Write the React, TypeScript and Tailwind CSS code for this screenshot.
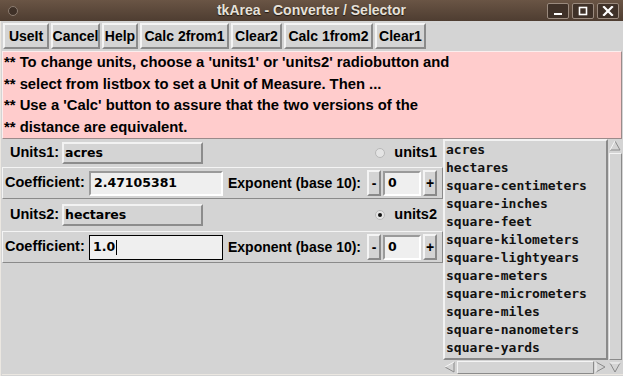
import type { ReactNode } from "react"

const ui = { fontFamily: '"Liberation Sans", Arial, sans-serif' }
const entryFont = { fontFamily: '"DejaVu Sans", Verdana, sans-serif' }
const mono = { fontFamily: '"DejaVu Sans Mono", "Liberation Mono", monospace' }

const toolButtons = [
  { label: "UseIt", w: "w-[46px]" },
  { label: "Cancel", w: "w-[49px]" },
  { label: "Help", w: "w-[36px]" },
  { label: "Calc 2from1", w: "w-[89px]" },
  { label: "Clear2", w: "w-[51px]" },
  { label: "Calc 1from2", w: "w-[89px]" },
  { label: "Clear1", w: "w-[51px]" },
]

const units = [
  "acres",
  "hectares",
  "square-centimeters",
  "square-inches",
  "square-feet",
  "square-kilometers",
  "square-lightyears",
  "square-meters",
  "square-micrometers",
  "square-miles",
  "square-nanometers",
  "square-yards",
]

// raised tk-style button
const TkButton = ({ children, className = "" }: { children: ReactNode; className?: string }) => (
  <div
    className={`flex items-center justify-center border-2 border-t-[#f4f4f4] border-l-[#f4f4f4] border-b-[#8a8a8a] border-r-[#8a8a8a] bg-[#d4d4d4] text-[14px] font-bold text-black ${className}`}
    style={ui}
  >
    {children}
  </div>
)

const Radio = ({ checked, label }: { checked: boolean; label: string }) => (
  <div className="flex items-center gap-[8px] pr-[6px]">
    <svg width="12" height="12" viewBox="0 0 12 12">
      <circle cx="6" cy="6" r="4.5" fill="#e4e4e4" stroke="#b8b8b8" strokeWidth="1" />
      {checked && <circle cx="6" cy="6" r="2" fill="#111" />}
    </svg>
    <span className="text-[14.5px] font-bold text-black" style={ui}>
      {label}
    </span>
  </div>
)

const UnitsRow = ({ name, value, checked, radio }: { name: string; value: string; checked: boolean; radio: string }) => (
  <div className="flex h-[28px] items-center">
    <span className="w-[60px] pl-[8px] text-[14.5px] font-bold text-black" style={ui}>
      {name}
    </span>
    <div
      className="flex h-[22px] w-[141px] items-center border-2 border-t-[#f2f2f2] border-l-[#f2f2f2] border-b-[#8c8c8c] border-r-[#8c8c8c] pl-[1px] text-[12.5px] font-bold text-black"
      style={entryFont}
    >
      {value}
    </div>
    <div className="flex-1" />
    <Radio checked={checked} label={radio} />
  </div>
)

const CoefRow = ({ value, focused }: { value: string; focused?: boolean }) => (
  <div className="flex h-[32px] items-center border border-t-[#f4f4f4] border-l-[#f4f4f4] border-b-[#8a8a8a] border-r-[#8a8a8a]">
    <span className="w-[86px] pl-[2px] text-[14.5px] font-bold text-black" style={ui}>
      Coefficient:
    </span>
    <div
      className={`flex h-[25px] w-[134px] items-center bg-[#efefef] pl-[3px] text-[12.5px] font-bold text-black ${
        focused ? "border border-black" : "border-2 border-t-[#9a9a9a] border-l-[#9a9a9a] border-b-white border-r-white"
      }`}
      style={entryFont}
    >
      {value}
      {focused && <span className="ml-px h-[15px] w-px bg-black" />}
    </div>
    <span className="ml-[5px] w-[139px] text-[14px] font-bold text-black" style={ui}>
      Exponent (base 10):
    </span>
    <TkButton className="h-[26px] w-[14px]">-</TkButton>
    <div
      className="ml-[2px] flex h-[25px] w-[38px] items-center border-2 border-t-[#9a9a9a] border-l-[#9a9a9a] border-b-white border-r-white bg-[#efefef] pl-[3px] text-[12.5px] font-bold text-black"
      style={entryFont}
    >
      0
    </div>
    <TkButton className="ml-[2px] h-[26px] w-[14px]">+</TkButton>
  </div>
)

const Arrow = ({ dir }: { dir: "up" | "down" | "left" | "right" }) => {
  const pts = {
    up: { light: "2,11 7,2", dark: "7,2 12,11 2,11" },
    down: { light: "2,3 12,3", dark: "12,3 7,12 2,3" },
    left: { light: "11,2 2,7", dark: "2,7 11,12 11,2" },
    right: { light: "2,2 2,12", dark: "2,12 11,7 2,2" },
  }[dir]
  return (
    <svg width="14" height="14" viewBox="0 0 14 14" className="shrink-0">
      <polyline points={pts.dark} fill="none" stroke="#8a8a8a" strokeWidth="1" />
      <polyline points={pts.light} fill="none" stroke="#f6f6f6" strokeWidth="1" />
    </svg>
  )
}

export default function App() {
  return (
    <div className="flex h-[376px] w-[623px] flex-col overflow-hidden bg-[#4c3c30]">
      {/* title bar */}
      <div className="grid h-[21px] shrink-0 grid-cols-[1fr_auto_1fr] items-center bg-gradient-to-b from-[#6a5545] to-[#4e3d31]">
        <div className="pl-[7px]">
          <svg width="12" height="12" viewBox="0 0 12 12">
            <circle cx="6" cy="6" r="4.5" fill="#3f3128" stroke="#8c7c70" strokeWidth="1" />
          </svg>
        </div>
        <span className="text-[14px] font-bold text-[#e6e1d9] [text-shadow:0_1px_1px_#1e150f]" style={ui}>
          tkArea - Converter / Selector
        </span>
        <div className="flex justify-end gap-[3px] pr-[4px]">
          {["min", "max", "close"].map((k) => (
            <div
              key={k}
              className="flex h-[16px] w-[22px] items-center justify-center rounded-[2px] border border-[#9a8a7e] bg-[#3f3128]"
            >
              <svg width="12" height="10" viewBox="0 0 12 10">
                {k === "min" && <rect x="2" y="7" width="8" height="2" fill="#fff" />}
                {k === "max" && <rect x="2.5" y="1.5" width="7" height="7" fill="none" stroke="#fff" strokeWidth="1.6" />}
                {k === "close" && (
                  <path d="M2 1 L10 9 M10 1 L2 9" stroke="#fff" strokeWidth="2.2" strokeLinecap="square" />
                )}
              </svg>
            </div>
          ))}
        </div>
      </div>

      <div className="flex flex-1 flex-col border-l border-[#ebe7e1] bg-[#d4d4d4] pl-px">
        {/* toolbar */}
        <div className="flex h-[30px] shrink-0 items-start gap-[2px] pl-px pt-[2px]">
          {toolButtons.map((b) => (
            <TkButton key={b.label} className={`h-[26px] ${b.w}`}>
              {b.label}
            </TkButton>
          ))}
        </div>

        {/* instructions */}
        <div
          className="mr-[1px] h-[88px] shrink-0 border border-t-[#fbeeee] border-l-[#fbeeee] border-b-[#9a8a8a] border-r-[#9a8a8a] bg-[#ffcccc] pl-px text-[14.8px] font-bold leading-[21.5px] text-black"
          style={ui}
        >
          <div>** To change units, choose a 'units1' or 'units2' radiobutton and</div>
          <div>** select from listbox to set a Unit of Measure. Then ...</div>
          <div>** Use a 'Calc' button to assure that the two versions of the</div>
          <div>** distance are equivalent.</div>
        </div>

        {/* main */}
        <div className="flex h-[235px] shrink-0">
          <div className="flex w-[441px] flex-col">
            <UnitsRow name="Units1:" value="acres" checked={false} radio="units1" />
            <CoefRow value="2.47105381" />
            <div className="flex h-[32px] flex-col justify-center">
              <UnitsRow name="Units2:" value="hectares" checked radio="units2" />
            </div>
            <CoefRow value="1.0" focused />
          </div>

          <div className="flex w-[165px] flex-col">
            <div
              className="h-[221px] border-2 border-t-[#f2f2f2] border-l-[#f2f2f2] border-b-[#8a8a8a] border-r-[#8a8a8a] pl-px text-[13px] font-bold leading-[18px] text-[#111]"
              style={mono}
            >
              {units.map((u) => (
                <div key={u}>{u}</div>
              ))}
            </div>
            <div className="flex h-[14px] items-center">
              <Arrow dir="left" />
              <div className="h-[13px] flex-1 border border-t-[#f4f4f4] border-l-[#f4f4f4] border-b-[#8a8a8a] border-r-[#8a8a8a]" />
              <Arrow dir="right" />
            </div>
          </div>

          <div className="flex w-[14px] flex-col items-center">
            <Arrow dir="up" />
            <div className="w-[13px] flex-1 border border-t-[#f4f4f4] border-l-[#f4f4f4] border-b-[#8a8a8a] border-r-[#8a8a8a]" />
            <Arrow dir="down" />
          </div>
        </div>

        <div className="flex-1 border-t border-[#ebe7e1]" />
      </div>
    </div>
  )
}
